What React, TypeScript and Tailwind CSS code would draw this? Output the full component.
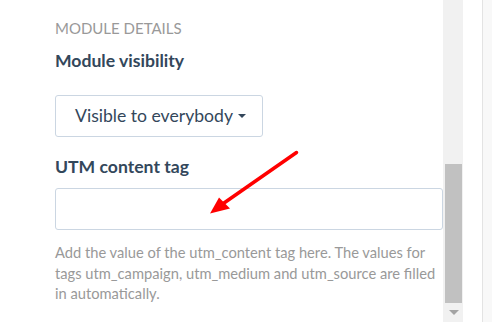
import React from "react";

export default function App() {
  return (
    <div
      className="relative flex h-[322px] w-[492px] overflow-hidden bg-white"
      style={{ fontFamily: "Lato, 'Open Sans', sans-serif" }}
    >
      <div className="w-[443px] shrink-0 pl-[55px] pt-[18px]">
        <div className="text-[15px] leading-[20px] uppercase text-[#999999]">Module details</div>
        <div className="mt-[13px] text-[17.6px] font-bold leading-[20px] text-[#33475b]">Module visibility</div>
        <div className="mt-[24px] flex h-[42px] w-[208px] items-center rounded-[3px] border border-[#cbd6e2] bg-white pl-[19px]">
          <span className="text-[17.6px] leading-[20px] text-[#33475b]">Visible to everybody</span>
          <span className="ml-[5px] mt-[-1px] h-0 w-0 border-l-[4px] border-r-[4px] border-t-[4.5px] border-l-transparent border-r-transparent border-t-[#33475b]" />
        </div>
        <div className="mt-[20px] text-[17.6px] font-bold leading-[20px] text-[#33475b]">UTM content tag</div>
        <div className="mt-[11px] h-[42px] w-[388px] rounded-[3px] border border-[#cbd6e2] bg-white" />
        <p className="mt-[12px] w-[388px] text-[14.7px] leading-[20.5px] text-[#999999]">
          Add the value of the utm_content tag here. The values for tags utm_campaign, utm_medium and utm_source are filled in automatically.
        </p>
      </div>
      <div className="relative flex w-[20px] shrink-0 flex-col bg-[#f1f1f1]">
        <div className="ml-[2px] mt-[164px] h-[139px] w-[17px] bg-[#c1c1c1]" />
        <div className="ml-[6px] mt-[7px] h-0 w-0 border-l-[5px] border-r-[5px] border-t-[5px] border-l-transparent border-r-transparent border-t-[#a3a3a3]" />
      </div>
      <div className="w-[19px] shrink-0 bg-white" />
      <div className="w-px shrink-0 bg-[#e3e3e3]" />
      <div className="flex-1 bg-[#f8f8f8]" />
      <svg className="pointer-events-none absolute left-0 top-0" width="492" height="322" viewBox="0 0 492 322">
        <line x1="296.5" y1="152.5" x2="224" y2="203" stroke="#ff0000" strokeWidth="3.5" strokeLinecap="round" />
        <polygon points="210,213.5 219,197.5 230,208.5" fill="#ff0000" />
      </svg>
    </div>
  );
}
